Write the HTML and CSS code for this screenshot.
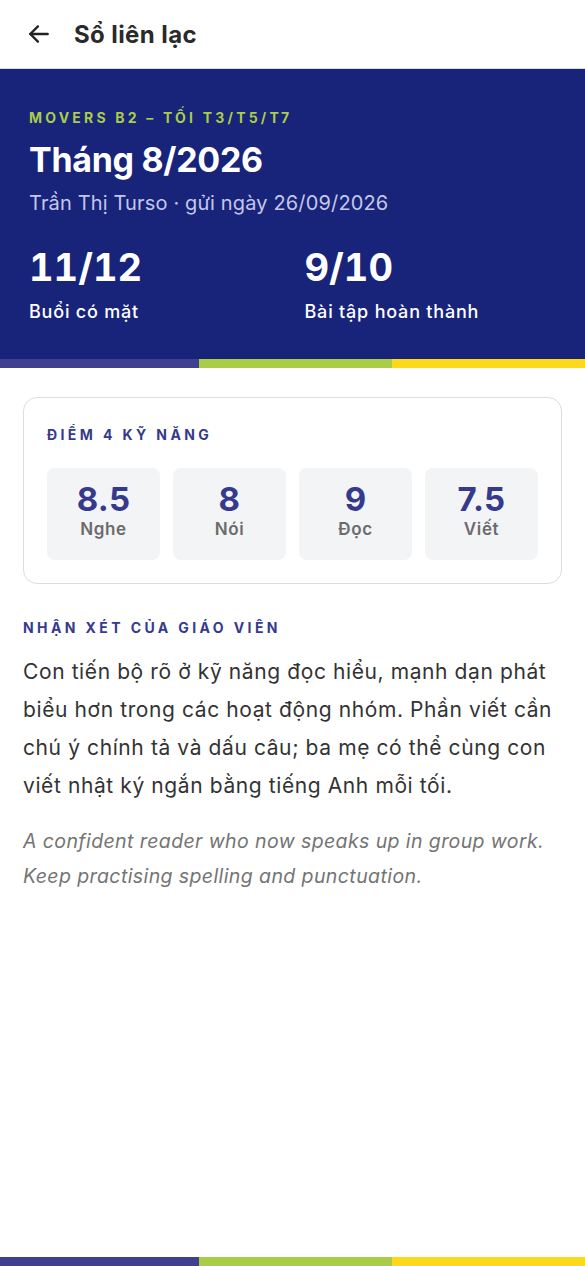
FILE: index.html
```html
<!DOCTYPE html>
<html lang="vi">
<head>
    <meta charset="UTF-8">
    <meta name="viewport" content="width=device-width, initial-scale=1.0">
    <title>Sổ liên lạc</title>
    <link rel="stylesheet" href="styles.css">
</head>
<body>
    <div class="page">
        <!-- Top app bar -->
        <header class="app-bar">
            <button class="back-btn" aria-label="Quay lại">
                <svg width="26" height="26" viewBox="0 0 24 24" fill="none" stroke="#222" stroke-width="2.2" stroke-linecap="round" stroke-linejoin="round">
                    <path d="M20 12H4"/>
                    <path d="M11 5l-7 7 7 7"/>
                </svg>
            </button>
            <h1>Sổ liên lạc</h1>
        </header>

        <!-- Month summary banner -->
        <section class="hero">
            <div class="eyebrow">MOVERS B2 – TỐI T3/T5/T7</div>
            <h2 class="hero-title">Tháng 8/2026</h2>
            <div class="hero-sub">Trần Thị Turso · gửi ngày 26/09/2026</div>

            <div class="stats">
                <div class="stat">
                    <div class="stat-value">11/12</div>
                    <div class="stat-label">Buổi có mặt</div>
                </div>
                <div class="stat">
                    <div class="stat-value">9/10</div>
                    <div class="stat-label">Bài tập hoàn thành</div>
                </div>
            </div>
        </section>
        <div class="stripe">
            <span class="s1"></span><span class="s2"></span><span class="s3"></span>
        </div>

        <main class="content">
            <!-- Skill scores -->
            <div class="card">
                <div class="section-label">ĐIỂM 4 KỸ NĂNG</div>
                <div class="skills">
                    <div class="skill"><div class="skill-score">8.5</div><div class="skill-name">Nghe</div></div>
                    <div class="skill"><div class="skill-score">8</div><div class="skill-name">Nói</div></div>
                    <div class="skill"><div class="skill-score">9</div><div class="skill-name">Đọc</div></div>
                    <div class="skill"><div class="skill-score">7.5</div><div class="skill-name">Viết</div></div>
                </div>
            </div>

            <!-- Teacher comment -->
            <div class="comment">
                <div class="section-label">NHẬN XÉT CỦA GIÁO VIÊN</div>
                <p class="comment-vi">Con tiến bộ rõ ở kỹ năng đọc hiểu, mạnh dạn phát biểu hơn trong các hoạt động nhóm. Phần viết cần chú ý chính tả và dấu câu; ba mẹ có thể cùng con viết nhật ký ngắn bằng tiếng Anh mỗi tối.</p>
                <p class="comment-en">A confident reader who now speaks up in group work. Keep practising spelling and punctuation.</p>
            </div>
        </main>

        <div class="stripe bottom">
            <span class="s1"></span><span class="s2"></span><span class="s3"></span>
        </div>
    </div>
</body>
</html>
```

FILE: styles.css
```css
/* Colours */
:root {
    --navy: #18237a;
    --indigo: #363a8e;
    --purple: #40408f;
    --lime: #a9cd47;
    --yellow: #fcd91b;
    --text: #333333;
    --muted: #6b6b6b;
    --tile: #f3f4f6;
}

* {
    box-sizing: border-box;
}

body {
    margin: 0;
    font-family: Inter, "Noto Sans", sans-serif;
    color: var(--text);
    background: #ffffff;
}

.page {
    min-height: 1266px;
    display: flex;
    flex-direction: column;
}

/* App bar */
.app-bar {
    height: 69px;
    display: flex;
    align-items: center;
    padding: 0 0 0 25px;
    border-bottom: 1px solid #d9d9de;
}

.back-btn {
    background: none;
    border: none;
    padding: 0;
    width: 28px;
    height: 28px;
    display: flex;
    align-items: center;
    justify-content: center;
    margin-right: 21px;
}

.app-bar h1 {
    margin: 0;
    font-size: 24px;
    font-weight: 700;
    letter-spacing: 0.4px;
    color: #2a2a2a;
}

/* Banner */
.hero {
    background: var(--navy);
    color: #ffffff;
    padding: 40px 29px 0;
    height: 290px;
}

.eyebrow {
    color: var(--lime);
    font-size: 14px;
    font-weight: 700;
    letter-spacing: 3.2px;
    line-height: 18px;
}

.hero-title {
    margin: 11px 0 0;
    font-size: 34px;
    font-weight: 700;
    line-height: 44px;
    letter-spacing: -0.3px;
}

.hero-sub {
    margin-top: 8px;
    font-size: 20px;
    line-height: 26px;
    letter-spacing: 0.15px;
    color: #c3c8ea;
}

.stats {
    display: grid;
    grid-template-columns: 1fr 1fr;
    column-gap: 24px;
    margin-top: 29px;
}

.stat-value {
    font-size: 38px;
    font-weight: 700;
    line-height: 44px;
    font-variant-numeric: tabular-nums;
}

.stat-label {
    margin-top: 11px;
    font-size: 18px;
    font-weight: 500;
    line-height: 24px;
    letter-spacing: 0.8px;
}

/* Tri-colour stripe */
.stripe {
    display: flex;
    height: 9px;
}

.stripe .s1 { width: 34%; background: var(--purple); }
.stripe .s2 { width: 33%; background: var(--lime); }
.stripe .s3 { width: 33%; background: var(--yellow); }

.stripe.bottom {
    margin-top: auto;
}

/* Content */
.content {
    padding: 29px 23px 0;
}

.card {
    border: 1px solid #dcdde2;
    border-radius: 14px;
    padding: 28px 23px 23px;
}

.section-label {
    color: var(--indigo);
    font-size: 14px;
    font-weight: 700;
    letter-spacing: 3.4px;
    line-height: 18px;
}

.skills {
    display: grid;
    grid-template-columns: repeat(4, 1fr);
    gap: 13px;
    margin-top: 24px;
}

.skill {
    background: var(--tile);
    border-radius: 8px;
    height: 92px;
    display: flex;
    flex-direction: column;
    align-items: center;
    padding-top: 12px;
}

.skill-score {
    color: var(--indigo);
    font-size: 33px;
    font-weight: 700;
    line-height: 38px;
    letter-spacing: 0.3px;
}

.skill-name {
    color: var(--muted);
    font-size: 17px;
    font-weight: 600;
    line-height: 22px;
    letter-spacing: 0.6px;
}

.comment {
    margin-top: 35px;
}

.comment-vi {
    margin: 16px 0 0;
    font-size: 21px;
    line-height: 38px;
    letter-spacing: 0.6px;
    color: var(--text);
}

.comment-en {
    margin: 19px 0 0;
    font-size: 19.5px;
    line-height: 35px;
    letter-spacing: 0.4px;
    font-style: italic;
    color: #747474;
}
```
